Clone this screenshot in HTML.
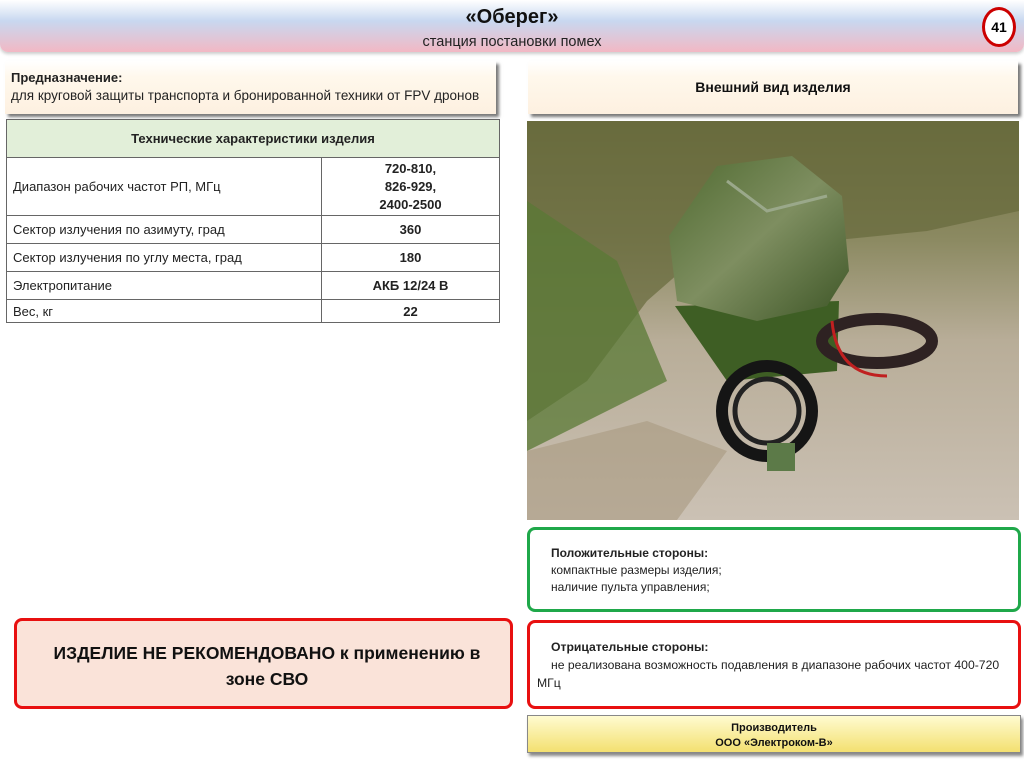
<!DOCTYPE html>
<html><head><meta charset="utf-8"><style>
*{margin:0;padding:0;box-sizing:border-box}
body{width:1024px;height:767px;background:#fff;font-family:"Liberation Sans",Arial,sans-serif;position:relative;overflow:hidden}
.abs{position:absolute}
.hdr{left:0;top:0;width:1024px;height:52px;background:linear-gradient(#fff 0%,#c8d8f0 40%,#f2b8c4 100%);border-radius:0 0 8px 8px;box-shadow:0 2px 3px #ccc}
.shadowbox{background:linear-gradient(#fff,#fff8ec 30%,#fdf0e0);box-shadow:3px 3px 3px #777;}
table{border-collapse:collapse;font-size:13px}
td{border:1px solid #666;height:28px;padding:0 6px;color:#222}
td.v{text-align:center;font-weight:bold;width:178px}
</style></head><body>
<div class="abs hdr"></div>
<div class="abs" style="left:0;top:6px;width:1024px;text-align:center;font-size:20px;font-weight:bold;color:#111">«Оберег»</div>
<div class="abs" style="left:0;top:34px;width:1024px;text-align:center;font-size:14.5px;color:#222">станция постановки помех</div>
<div class="abs" style="left:982px;top:7px;width:34px;height:40px;border:3px solid #c00;border-radius:50%;background:#fff;text-align:center;line-height:34px;font-weight:bold;font-size:14px">41</div>

<div class="abs shadowbox" style="left:5px;top:61px;width:491px;height:53px"></div>
<div class="abs" style="left:11px;top:70px;font-size:13px;font-weight:bold;color:#222">Предназначение:</div>
<div class="abs" style="left:11px;top:88px;font-size:13.5px;color:#222">для круговой защиты транспорта и бронированной техники от FPV дронов</div>

<div class="abs shadowbox" style="left:528px;top:61px;width:490px;height:53px"></div>
<div class="abs" style="left:528px;top:79px;width:490px;text-align:center;font-size:14px;font-weight:bold;color:#111">Внешний вид изделия</div>

<table class="abs" style="left:6px;top:119px;width:494px">
<tr><td colspan="2" style="background:#e2efd9;text-align:center;font-weight:bold;height:38px">Технические характеристики изделия</td></tr>
<tr><td style="height:58px">Диапазон рабочих частот РП, МГц</td><td class="v" style="line-height:18px">720-810,<br>826-929,<br>2400-2500</td></tr>
<tr><td>Сектор излучения по азимуту, град</td><td class="v">360</td></tr>
<tr><td>Сектор излучения по углу места, град</td><td class="v">180</td></tr>
<tr><td>Электропитание</td><td class="v">АКБ 12/24 В</td></tr>
<tr><td style="height:23px">Вес, кг</td><td class="v" style="height:23px">22</td></tr>
</table>

<svg class="abs" style="left:527px;top:121px" width="492" height="399" viewBox="0 0 492 399">
<defs>
<linearGradient id="bg" x1="0" y1="0" x2="0" y2="1"><stop offset="0" stop-color="#6e7040"/><stop offset="0.3" stop-color="#8c8a62"/><stop offset="0.55" stop-color="#b8ad98"/><stop offset="1" stop-color="#cbc1b4"/></linearGradient>
<linearGradient id="dome" x1="0" y1="0" x2="1" y2="1"><stop offset="0" stop-color="#4f6a30"/><stop offset="0.5" stop-color="#7e8e60"/><stop offset="1" stop-color="#3d5526"/></linearGradient>
</defs>
<rect width="492" height="399" fill="url(#bg)"/>
<path d="M0 0H492V90L400 110 300 120 200 110 120 180 60 260 0 300Z" fill="#666a3c" opacity=".7"/>
<path d="M0 80L90 140 140 260 100 280 0 330Z" fill="#5a7a35" opacity=".75"/>
<path d="M0 330L120 300 200 330 150 399 0 399Z" fill="#a89a80" opacity=".6"/>
<path d="M148 185L312 180 310 250 200 260Z" fill="#3e5e24"/>
<path d="M142 115L190 45 265 35 315 75 322 150 300 185 230 200 150 180Z" fill="url(#dome)"/>
<path d="M200 60L240 90 300 75" stroke="#9aa88a" stroke-width="3" fill="none"/>
<circle cx="240" cy="290" r="45" fill="none" stroke="#151515" stroke-width="12"/>
<circle cx="240" cy="290" r="32" fill="none" stroke="#222" stroke-width="5"/>
<ellipse cx="350" cy="220" rx="55" ry="22" fill="none" stroke="#2e2222" stroke-width="12"/>
<path d="M305 200Q310 255 360 255" stroke="#c02020" stroke-width="3" fill="none"/>
<rect x="240" y="322" width="28" height="28" fill="#5c7a48"/>
</svg>

<div class="abs" style="left:527px;top:527px;width:494px;height:85px;border:3px solid #1fa84a;border-radius:8px"></div>
<div class="abs" style="left:551px;top:545px;font-size:12px;line-height:17px;color:#222"><b>Положительные стороны:</b><br>компактные размеры изделия;<br>наличие пульта управления;</div>

<div class="abs" style="left:527px;top:620px;width:494px;height:89px;border:3px solid #e81010;border-radius:8px"></div>
<div class="abs" style="left:537px;top:638px;width:484px;font-size:12.2px;line-height:18px;color:#222"><span style="margin-left:14px"><b>Отрицательные стороны:</b></span><br><span style="margin-left:14px">не реализована возможность подавления в диапазоне рабочих частот 400-720</span><br>МГц</div>

<div class="abs" style="left:527px;top:715px;width:494px;height:38px;background:linear-gradient(#fffbd0,#f3e070);border:1px solid #888;box-shadow:2px 3px 3px #888"></div>
<div class="abs" style="left:527px;top:721px;width:494px;text-align:center;font-size:11px;font-weight:bold;line-height:15px;color:#111">Производитель<br>ООО «Электроком-В»</div>

<div class="abs" style="left:14px;top:618px;width:499px;height:91px;background:#fae3d9;border:3px solid #e81010;border-radius:8px"></div>
<div class="abs" style="left:22px;top:640px;width:490px;text-align:center;font-size:17.5px;font-weight:bold;line-height:26px;color:#111">ИЗДЕЛИЕ НЕ РЕКОМЕНДОВАНО к применению в<br>зоне СВО</div>
</body></html>
